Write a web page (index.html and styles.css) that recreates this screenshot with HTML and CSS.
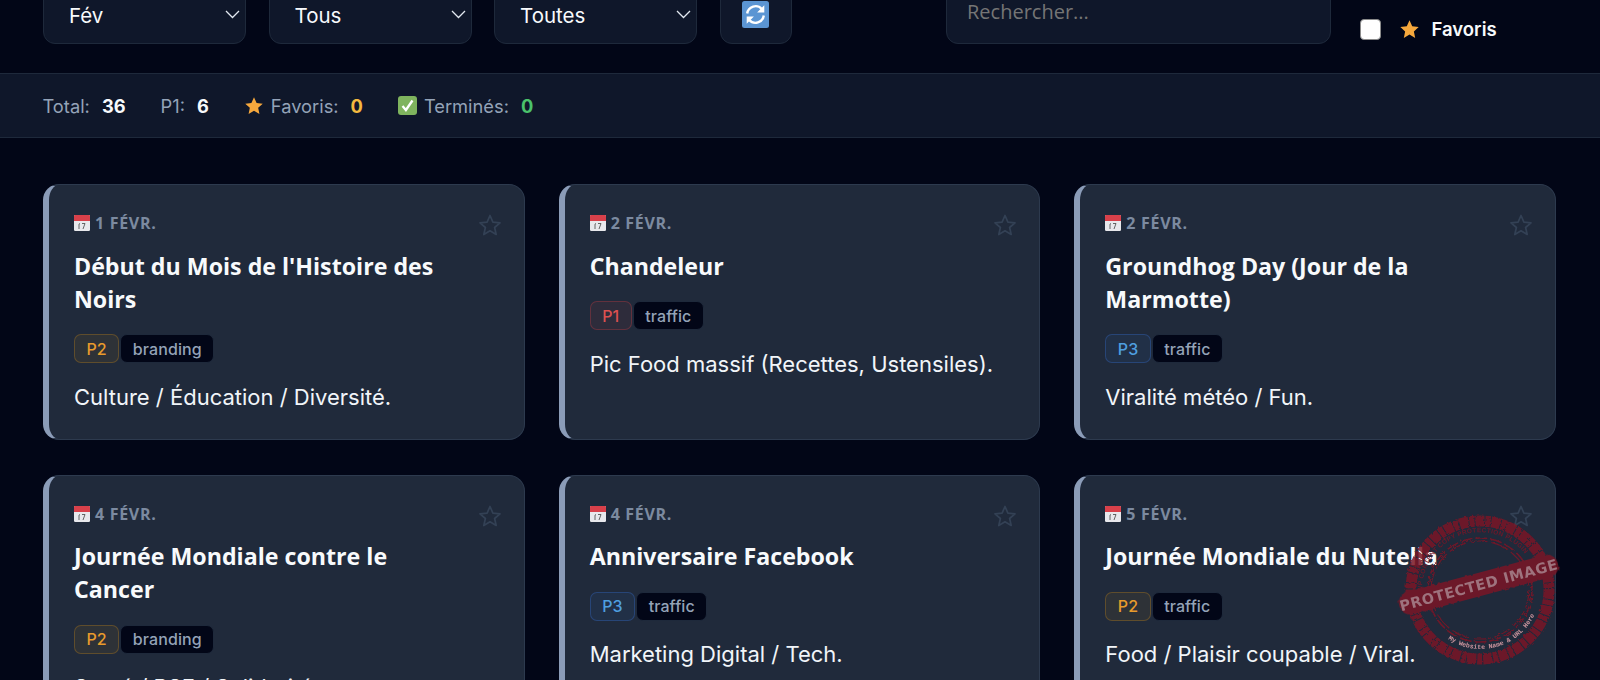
FILE: index.html
```html
<!DOCTYPE html>
<html lang="fr">
<head>
<meta charset="utf-8">
<title>Calendrier</title>
<link rel="stylesheet" href="styles.css">
</head>
<body>
<svg class="defs" aria-hidden="true">
  <defs>
    <symbol id="chev" viewBox="0 0 15 9"><path d="M1 1l6.5 6.5L14 1" fill="none" stroke="currentColor" stroke-width="1.3"/></symbol>
    <symbol id="star" viewBox="0 0 24 24"><path d="M12 1.5l3.1 6.9 7.4.8-5.5 5 1.5 7.4-6.5-3.8-6.5 3.8 1.5-7.4-5.5-5 7.4-.8z" fill="#f6a83d"/></symbol>
    <symbol id="star-o" viewBox="0 0 24 24"><path d="M12 2.5l2.9 6.6 7.1.7-5.4 4.7 1.6 7-6.2-3.7-6.2 3.7 1.6-7L2 9.8l7.1-.7z" fill="none" stroke="#334155" stroke-width="1.7" stroke-linejoin="round"/></symbol>
    <symbol id="cal" viewBox="0 0 16 16"><rect width="16" height="16" rx="1.2" fill="#e8e8ec"/><path d="M0 1.2C0 .5.5 0 1.2 0h13.6c.7 0 1.2.5 1.2 1.2V6H0z" fill="#d8404a"/><path d="M6 8.5l-1 .6V14M8 8.5h3L9 14" fill="none" stroke="#555" stroke-width=".9"/></symbol>
  </defs>
</svg>

<header class="toolbar">
  <div class="select"><span>Fév</span><svg class="chev"><use href="#chev"/></svg></div>
  <div class="select"><span>Tous</span><svg class="chev"><use href="#chev"/></svg></div>
  <div class="select"><span>Toutes</span><svg class="chev"><use href="#chev"/></svg></div>
  <button class="refresh" type="button" aria-label="Actualiser">
    <svg viewBox="0 0 27 27" class="refresh-icon">
      <rect width="27" height="27" rx="2.5" fill="#5b95d3"/>
      <path d="M5.2 12.5A8.4 8.4 0 0 1 19.8 8" fill="none" stroke="#fff" stroke-width="2.4"/>
      <path d="M21.8 14.5A8.4 8.4 0 0 1 7.2 19" fill="none" stroke="#fff" stroke-width="2.4"/>
      <path d="M22.3 4.2v7.2h-7.2zM4.7 22.8v-7.2h7.2z" fill="#fff"/>
    </svg>
  </button>
  <input class="search" type="text" placeholder="Rechercher...">
  <label class="fav-filter">
    <input class="check" type="checkbox">
    <svg class="star-s"><use href="#star"/></svg>
    <span>Favoris</span>
  </label>
</header>

<section class="stats">
  <div class="stat"><span>Total:</span><b>36</b></div>
  <div class="stat"><span>P1:</span><b>6</b></div>
  <div class="stat"><svg class="star-s"><use href="#star"/></svg><span>Favoris:</span><b class="amber">0</b></div>
  <div class="stat">
    <svg class="done" viewBox="0 0 19 19"><rect width="19" height="19" rx="3" fill="#7fb45e"/><path d="M4.5 10l3.4 4L14.5 4.5" fill="none" stroke="#fff" stroke-width="2.3"/></svg>
    <span>Terminés:</span><b class="green">0</b>
  </div>
</section>

<main class="grid">
  <article class="card">
    <div class="date"><svg class="cal"><use href="#cal"/></svg>1 févr.</div>
    <svg class="fav"><use href="#star-o"/></svg>
    <h2>Début du Mois de l'Histoire des Noirs</h2>
    <div class="tags"><span class="tag p2">P2</span><span class="tag cat">branding</span></div>
    <p>Culture / Éducation / Diversité.</p>
  </article>
  <article class="card">
    <div class="date"><svg class="cal"><use href="#cal"/></svg>2 févr.</div>
    <svg class="fav"><use href="#star-o"/></svg>
    <h2>Chandeleur</h2>
    <div class="tags"><span class="tag p1">P1</span><span class="tag cat">traffic</span></div>
    <p>Pic Food massif (Recettes, Ustensiles).</p>
  </article>
  <article class="card">
    <div class="date"><svg class="cal"><use href="#cal"/></svg>2 févr.</div>
    <svg class="fav"><use href="#star-o"/></svg>
    <h2>Groundhog Day (Jour de la Marmotte)</h2>
    <div class="tags"><span class="tag p3">P3</span><span class="tag cat">traffic</span></div>
    <p>Viralité météo / Fun.</p>
  </article>
  <article class="card">
    <div class="date"><svg class="cal"><use href="#cal"/></svg>4 févr.</div>
    <svg class="fav"><use href="#star-o"/></svg>
    <h2>Journée Mondiale contre le Cancer</h2>
    <div class="tags"><span class="tag p2">P2</span><span class="tag cat">branding</span></div>
    <p>Santé / RSE / Solidarité.</p>
  </article>
  <article class="card">
    <div class="date"><svg class="cal"><use href="#cal"/></svg>4 févr.</div>
    <svg class="fav"><use href="#star-o"/></svg>
    <h2>Anniversaire Facebook</h2>
    <div class="tags"><span class="tag p3">P3</span><span class="tag cat">traffic</span></div>
    <p>Marketing Digital / Tech.</p>
  </article>
  <article class="card">
    <div class="date"><svg class="cal"><use href="#cal"/></svg>5 févr.</div>
    <svg class="fav"><use href="#star-o"/></svg>
    <h2>Journée Mondiale du Nutella</h2>
    <div class="tags"><span class="tag p2">P2</span><span class="tag cat">traffic</span></div>
    <p>Food / Plaisir coupable / Viral.</p>
  </article>
</main>

<svg class="stamp" viewBox="0 0 170 170" aria-hidden="true">
  <defs>
    <filter id="rough" x="-10%" y="-10%" width="120%" height="120%">
      <feTurbulence type="fractalNoise" baseFrequency="0.35" numOctaves="2" seed="4"/>
      <feDisplacementMap in="SourceGraphic" scale="3.5"/>
    </filter>
    <path id="arc-top" d="M27 87A58 58 0 0 1 131 50"/>
    <path id="arc-bot" d="M53 134A59 59 0 0 0 143 100"/>
  </defs>
  <g filter="url(#rough)" fill="none" stroke="#7a1526">
    <circle cx="85" cy="85" r="69" stroke-width="11" stroke-dasharray="9 1 5 1"/>
    <circle cx="85" cy="85" r="52" stroke-width="1.6" stroke-dasharray="12 3"/>
    <circle cx="85" cy="85" r="49" stroke-width="1.2" stroke-dasharray="18 4"/>
  </g>
  <text class="stamp-arc"><textPath href="#arc-top">WP CONTENT COPY PROTECTION PLUGIN</textPath></text>
  <text class="stamp-url"><textPath href="#arc-bot">My Website Name &amp; URL Here</textPath></text>
  <g transform="rotate(-15 85 85)">
    <rect x="3" y="68" width="164" height="23" rx="11" fill="#7a1526" filter="url(#rough)"/>
    <text class="stamp-main" x="85" y="85" text-anchor="middle">PROTECTED IMAGE</text>
  </g>
</svg>
</body>
</html>
```

FILE: styles.css
```css
* { box-sizing: border-box; }

html, body {
  margin: 0;
  height: 680px;
  overflow: hidden;
}

body {
  position: relative;
  background: #020617;
  color: #f8fafc;
  font-family: Inter, "Liberation Sans", sans-serif;
}

.defs { position: absolute; width: 0; height: 0; }

.toolbar {
  height: 73px;
  overflow: hidden;
  display: flex;
  align-items: flex-end;
  gap: 22.5px;
  padding: 0 43px 29px;
}

.select {
  width: 203px;
  height: 58px;
  flex: none;
  display: flex;
  align-items: center;
  justify-content: space-between;
  padding: 0 5px 0 25px;
  background: #0f172a;
  border: 1px solid #1e293b;
  border-radius: 12px;
  font-size: 20.5px;
}

.chev { width: 15px; height: 9px; color: #e2e8f0; margin-top: -1px; }

.refresh {
  width: 72px;
  height: 58px;
  flex: none;
  display: flex;
  align-items: center;
  justify-content: center;
  padding: 0;
  background: #0f172a;
  border: 1px solid #1e293b;
  border-radius: 12px;
}

.refresh-icon { width: 27px; height: 27px; margin-top: -1px; }

.search {
  width: 385px;
  height: 66px;
  flex: none;
  margin-left: 132px;
  padding: 0 20px;
  background: #0f172a;
  border: 1px solid #1e293b;
  border-radius: 12px;
  color: #f8fafc;
  font: 20px "Open Sans", sans-serif;
}

.search::placeholder { color: #757575; opacity: 1; }

.fav-filter {
  flex: none;
  height: 30px;
  margin-left: 6px;
  display: flex;
  align-items: center;
  font-size: 18.5px;
  font-weight: 600;
}

.check {
  appearance: none;
  width: 21px;
  height: 21px;
  margin: 0 18px 0 0;
  background: #fff;
  border: 1px solid #8a8a8a;
  border-radius: 4px;
}

.star-s { width: 20px; height: 20px; flex: none; }

.fav-filter .star-s { width: 21px; height: 21px; margin-right: 12px; }

.stats {
  height: 65px;
  display: flex;
  align-items: center;
  gap: 35px;
  padding: 0 42.5px;
  background: #0f172a;
  border-top: 1px solid #1e293b;
  border-bottom: 1px solid #1e293b;
  font-size: 18.3px;
  color: #94a3b8;
}

.stat { display: flex; align-items: center; gap: 7px; }

.stat b { margin-left: 5px; font-weight: 700; color: #f8fafc; }

.stat b.amber { color: #f4b93f; }

.stat b.green { color: #4ac26b; }

.done { width: 19px; height: 19px; flex: none; }

.grid {
  display: grid;
  grid-template-columns: repeat(3, 1fr);
  column-gap: 34px;
  row-gap: 34.5px;
  padding: 46px 44px 0 43px;
}

.card {
  position: relative;
  min-height: 256px;
  padding: 28px 26px 25px 25px;
  background: #202a3b;
  border: 1px solid #2d3a4e;
  border-left: 6px solid #8b9cb8;
  border-radius: 16px;
}

.date {
  display: flex;
  align-items: center;
  gap: 5px;
  height: 20px;
  font: 700 16px/20px "Open Sans", sans-serif;
  letter-spacing: .7px;
  text-transform: uppercase;
  color: #7c8aa0;
}

.cal { width: 16px; height: 16px; flex: none; }

.fav {
  position: absolute;
  top: 28px;
  right: 22px;
  width: 24px;
  height: 24px;
}

.card h2 {
  margin: 16.5px 30px 0 0;
  font: 700 23.2px/33px "Open Sans", sans-serif;
  color: #f8fafc;
}

.tags { display: flex; gap: 1px; margin-top: 18.5px; }

.tag {
  height: 29px;
  padding: 0 11.5px;
  display: flex;
  align-items: center;
  border-radius: 7px;
  font-size: 16px;
  font-weight: 500;
  letter-spacing: .1px;
  border: 1px solid transparent;
}

.p1 { color: #dc5050; background: rgba(239, 68, 68, .07); border-color: rgba(239, 68, 68, .27); }

.p2 { color: #e89b2c; background: rgba(245, 158, 11, .07); border-color: rgba(245, 158, 11, .25); }

.p3 { color: #4f9fe0; background: rgba(59, 130, 246, .07); border-color: rgba(59, 130, 246, .27); }

.cat { color: #94a3b8; background: #020617; border-color: #1e293b; }

.card p {
  margin: 18.5px 0 0;
  font-size: 22px;
  line-height: 30px;
  color: #f1f5f9;
}

.stamp {
  position: absolute;
  left: 1395px;
  top: 505px;
  width: 170px;
  height: 170px;
  opacity: .85;
  pointer-events: none;
}

.stamp-arc { font: 700 6.5px "Liberation Sans", sans-serif; fill: #7a1526; letter-spacing: .3px; }

.stamp-url { font: 700 6.5px "Liberation Mono", monospace; fill: #e8a6ae; }

.stamp-main { font: 700 14.5px "DejaVu Sans", sans-serif; fill: #b5808a; letter-spacing: .6px; }
```
